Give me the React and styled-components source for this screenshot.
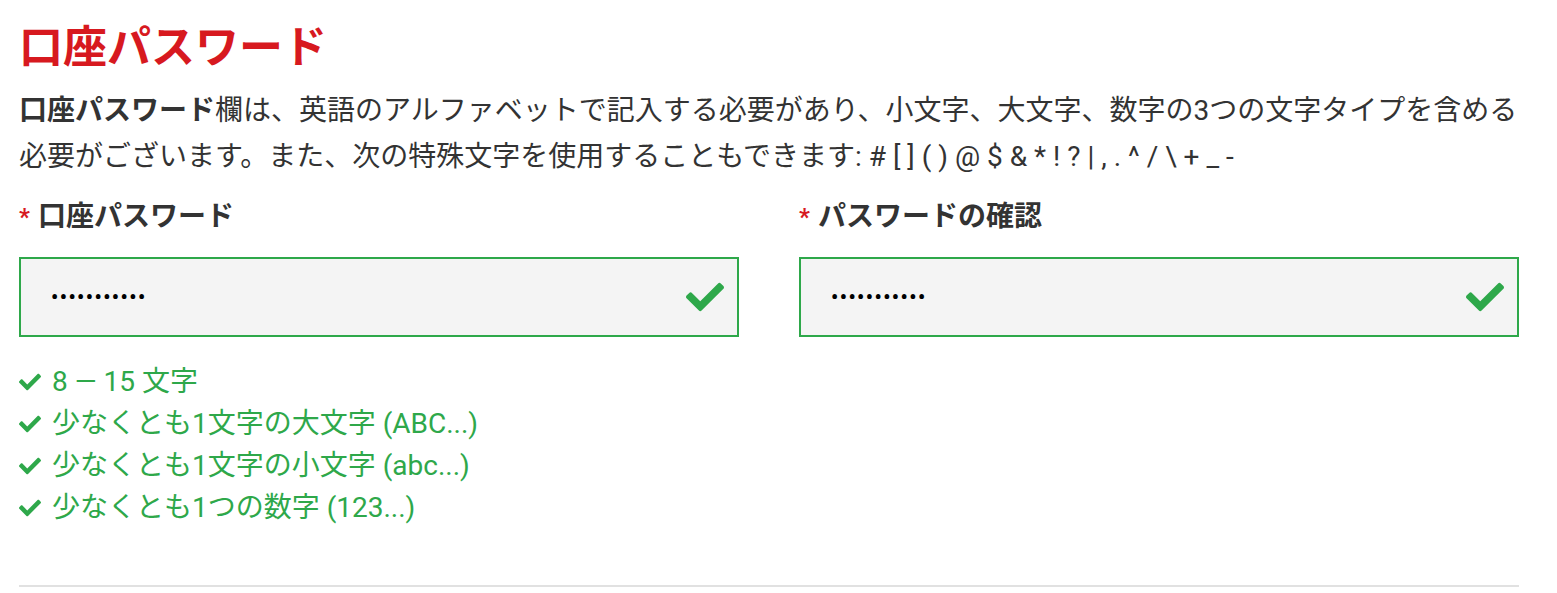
import React from 'react';
import styled, { createGlobalStyle } from 'styled-components';
import { FaCheck } from 'react-icons/fa';

const GlobalStyle = createGlobalStyle`
  html, body { margin: 0; padding: 0; background: #fff; }
  body { font-family: Roboto, "Noto Sans CJK JP", sans-serif; color: #333; }
`;

const Page = styled.div`
  width: 1500px; padding: 20px 0 0 19px;
`;

const Title = styled.h1`
  margin: 0; font-size: 44px; line-height: 56px; font-weight: 700; color: #d7191f;
`;

const Intro = styled.p`
  margin: 12px 0 0; font-size: 28px; line-height: 46px; color: #333;
  b { font-weight: 700; }
`;

const Columns = styled.div`
  display: grid; grid-template-columns: 1fr 1fr; gap: 60px; margin-top: 15px;
`;

const Col = styled.div` display: flex; flex-direction: column; `;

const Label = styled.label`
  font-size: 28px; line-height: 44px; font-weight: 700; color: #333;
  display: flex; align-items: center; gap: 8px;
`;

const Star = styled.span` color: #d7191f; font-size: 24px; `;

const Field = styled.div`
  margin-top: 18px; height: 80px; box-sizing: border-box;
  display: flex; align-items: center; padding: 0 13px 0 30px;
  background: #f4f4f4; border: 2px solid #2ea84a;
  color: #2ea84a;
`;

const Input = styled.input`
  flex: 1; border: none; outline: none; background: transparent;
  font-family: Roboto, sans-serif; font-size: 20px; font-weight: 700; color: #000;
  letter-spacing: 1.5px; padding: 0;
`;

const Rules = styled.ul`
  list-style: none; margin: 24px 0 0; padding: 0;
`;

const Rule = styled.li`
  display: flex; align-items: center; gap: 11px;
  font-size: 28px; line-height: 42px; color: #2ea84a;
  svg { flex: none; }
`;

const Divider = styled.hr`
  margin: 56px 0 0; border: none; height: 2px; background: #e1e1e1;
`;

const rules = [
  '8 — 15 文字',
  '少なくとも1文字の大文字 (ABC...)',
  '少なくとも1文字の小文字 (abc...)',
  '少なくとも1つの数字 (123...)',
];

const PasswordField = ({ label, value }) => (
  <Col>
    <Label><Star>*</Star>{label}</Label>
    <Field>
      <Input type="password" value={value} readOnly />
      <FaCheck size={38} />
    </Field>
  </Col>
);

export default function App() {
  return (
    <Page>
      <GlobalStyle />
      <Title>口座パスワード</Title>
      <Intro>
        <b>口座パスワード</b>欄は、英語のアルファベットで記入する必要があり、小文字、大文字、数字の3つの文字タイプを含める必要がございます。また、次の特殊文字を使用することもできます: # [ ] ( ) @ $ &amp; * ! ? | , . ^ / \ + _ -
      </Intro>
      <Columns>
        <Col>
          <PasswordField label="口座パスワード" value="Abcdefgh123" />
          <Rules>
            {rules.map(r => (
              <Rule key={r}><FaCheck size={22} />{r}</Rule>
            ))}
          </Rules>
        </Col>
        <PasswordField label="パスワードの確認" value="Abcdefgh123" />
      </Columns>
      <Divider />
    </Page>
  );
}
